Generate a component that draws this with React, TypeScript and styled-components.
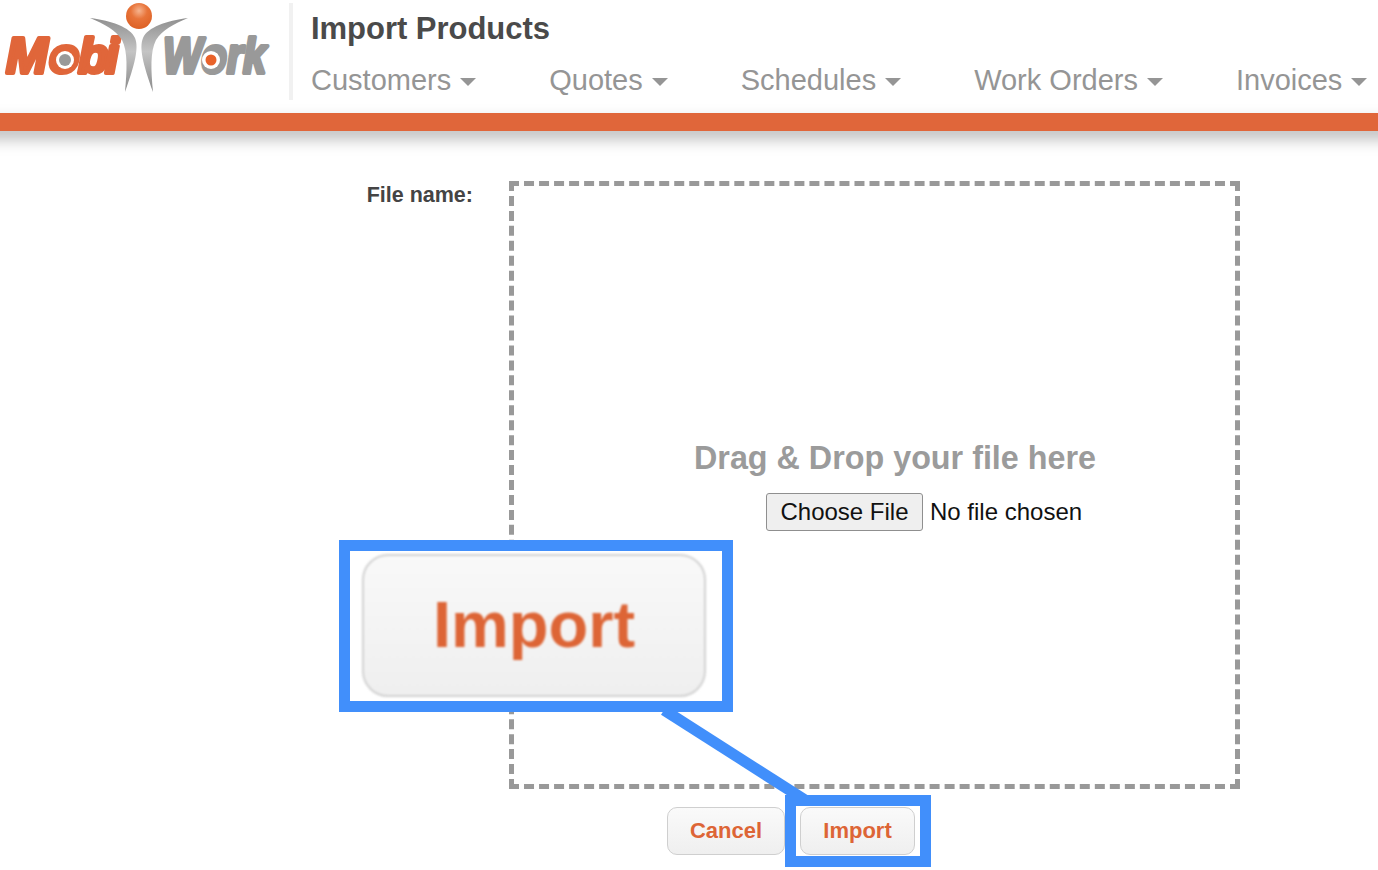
import React from "react";
import styled, { createGlobalStyle } from "styled-components";

const Global = createGlobalStyle`
  html, body { margin: 0; padding: 0; background: #fff; }
  body { font-family: "Liberation Sans", Arial, sans-serif; overflow: hidden; }
`;

const Page = styled.div`
  position: relative;
  width: 1378px;
  height: 870px;
  overflow: hidden;
  background: #fff;
`;

const Header = styled.header`
  display: flex;
  height: 113px;
  align-items: flex-start;
`;

const LogoBox = styled.div`
  width: 289px;
  height: 113px;
  flex: none;
`;

const Divider = styled.div`
  width: 4px;
  height: 97px;
  margin-top: 3px;
  flex: none;
  background: #f1f1f1;
`;

const HeadColumn = styled.div`
  display: flex;
  flex-direction: column;
  padding-left: 18px;
  white-space: nowrap;
`;

const Title = styled.h1`
  margin: 11px 0 0;
  font-size: 31px;
  line-height: 36px;
  font-weight: 700;
  letter-spacing: -0.03px;
  color: #4a4a4a;
`;

const Nav = styled.nav`
  display: flex;
  gap: 73px;
  margin-top: 16px;
`;

const NavItem = styled.a`
  display: flex;
  align-items: center;
  gap: 9px;
  font-size: 29px;
  line-height: 34px;
  color: #959595;
`;

const Caret = styled.span`
  width: 0;
  height: 0;
  margin-top: 3px;
  border-left: 8.5px solid transparent;
  border-right: 8.5px solid transparent;
  border-top: 8px solid #959595;
`;

const Bar = styled.div`
  height: 18px;
  margin: 0 -40px;
  background: #e0663a;
  box-shadow: 0 8px 16px rgba(0, 0, 0, 0.27);
`;

const Form = styled.main`
  display: grid;
  grid-template-columns: 473px 731px;
  column-gap: 36px;
  padding-top: 50px;
`;

const Label = styled.label`
  justify-self: end;
  margin-top: 2px;
  font-size: 21.5px;
  line-height: 24px;
  font-weight: 700;
  color: #444;
`;

const DropZone = styled.div`
  box-sizing: border-box;
  height: 608px;
  border: 5px dashed #999;
  padding-top: 253px;
`;

const DropText = styled.div`
  margin-left: 180px;
  font-size: 32.3px;
  line-height: 38px;
  font-weight: 700;
  color: #9b9b9b;
  white-space: nowrap;
`;

const FileInput = styled.input`
  display: block;
  width: 340px;
  margin: 16px 0 0 252px;
  font-family: "Liberation Sans", Arial, sans-serif;
  font-size: 24px;
  line-height: 28px;
  color: #111;

  &::file-selector-button {
    box-sizing: border-box;
    width: 157px;
    height: 38px;
    margin-right: 7px;
    padding: 0;
    font: inherit;
    color: #111;
    background: #efefef;
    border: 1px solid #8f8f8f;
    border-radius: 3px;
  }
`;

const Actions = styled.div`
  display: flex;
  gap: 15px;
  padding: 18px 0 0 667px;
`;

const ActionButton = styled.button<{ $w: number }>`
  box-sizing: border-box;
  width: ${(p) => p.$w}px;
  height: 48px;
  padding: 0;
  font-family: "Liberation Sans", Arial, sans-serif;
  font-size: 22px;
  font-weight: 700;
  color: #dd6536;
  background: linear-gradient(#fafafa, #efefef);
  border: 1px solid #cfcfcf;
  border-radius: 10px;
`;

const Callout = styled.div`
  position: absolute;
  left: 339px;
  top: 540px;
  box-sizing: border-box;
  width: 394px;
  height: 172px;
  padding: 3px 16px 4px 12px;
  background: #fff;
  border: 11px solid #418ffb;
`;

const BigButton = styled.div`
  box-sizing: border-box;
  display: flex;
  align-items: center;
  justify-content: center;
  height: 143px;
  padding-bottom: 3px;
  font-size: 65px;
  font-weight: 700;
  color: #dd6536;
  background: linear-gradient(#f9f9f9, #efefef);
  border: 2px solid #d2d2d2;
  border-radius: 26px;
  filter: blur(1px);
`;

const Highlight = styled.div`
  position: absolute;
  left: 785px;
  top: 795px;
  box-sizing: border-box;
  width: 146px;
  height: 72px;
  border: 11px solid #418ffb;
`;

const Connector = styled.svg`
  position: absolute;
  left: 650px;
  top: 705px;
`;

const Logo = () => (
  <svg width="289" height="113" viewBox="0 0 289 113">
    <defs>
      <linearGradient id="arm" x1="0" y1="0" x2="0" y2="1">
        <stop offset="0" stopColor="#8f8f8f" />
        <stop offset="0.45" stopColor="#c4c4c4" />
        <stop offset="1" stopColor="#8a8a8a" />
      </linearGradient>
      <radialGradient id="ball" cx="0.5" cy="0.3" r="0.7">
        <stop offset="0" stopColor="#f6b48f" />
        <stop offset="0.45" stopColor="#e8743a" />
        <stop offset="1" stopColor="#dd6125" />
      </radialGradient>
    </defs>
    <g
      fontFamily="'Liberation Sans', Arial, sans-serif"
      fontWeight="700"
      fontStyle="italic"
      fontSize="50"
      strokeWidth="4"
      strokeLinejoin="round"
    >
      <text x="6 49 78 105" y="73" fill="#e0663a" stroke="#e0663a">
        Mobi
      </text>
      <text x="163" y="73" fill="#999" stroke="#999" textLength="103" lengthAdjust="spacingAndGlyphs">
        Work
      </text>
    </g>
    <circle cx="65" cy="60" r="9" fill="#fff" />
    <circle cx="65" cy="60" r="6" fill="#999" />
    <circle cx="211" cy="60" r="9" fill="#fff" />
    <circle cx="211" cy="60" r="5.5" fill="#e8622a" />
    <path
      d="M90 18C112 21 130 27 135 38C139 48 135 64 125 92C127 70 128 52 122 40C116 30 104 24 90 18Z"
      fill="url(#arm)"
    />
    <path
      d="M188 18C166 21 148 27 143 38C139 48 143 64 153 92C151 70 150 52 156 40C162 30 174 24 188 18Z"
      fill="url(#arm)"
    />
    <circle cx="139" cy="16" r="13" fill="url(#ball)" />
  </svg>
);

const navItems = ["Customers", "Quotes", "Schedules", "Work Orders", "Invoices"];

export default function App() {
  return (
    <Page>
      <Global />
      <Header>
        <LogoBox>
          <Logo />
        </LogoBox>
        <Divider />
        <HeadColumn>
          <Title>Import Products</Title>
          <Nav>
            {navItems.map((n) => (
              <NavItem key={n}>
                {n}
                <Caret />
              </NavItem>
            ))}
          </Nav>
        </HeadColumn>
      </Header>
      <Bar />
      <Form>
        <Label>File name:</Label>
        <DropZone>
          <DropText>Drag &amp; Drop your file here</DropText>
          <FileInput type="file" />
        </DropZone>
      </Form>
      <Actions>
        <ActionButton $w={118}>Cancel</ActionButton>
        <ActionButton $w={115}>Import</ActionButton>
      </Actions>
      <Connector width="170" height="100" viewBox="0 0 170 100">
        <path d="M14 5L158 97" stroke="#418ffb" strokeWidth="11" fill="none" />
      </Connector>
      <Callout>
        <BigButton>Import</BigButton>
      </Callout>
      <Highlight />
    </Page>
  );
}
